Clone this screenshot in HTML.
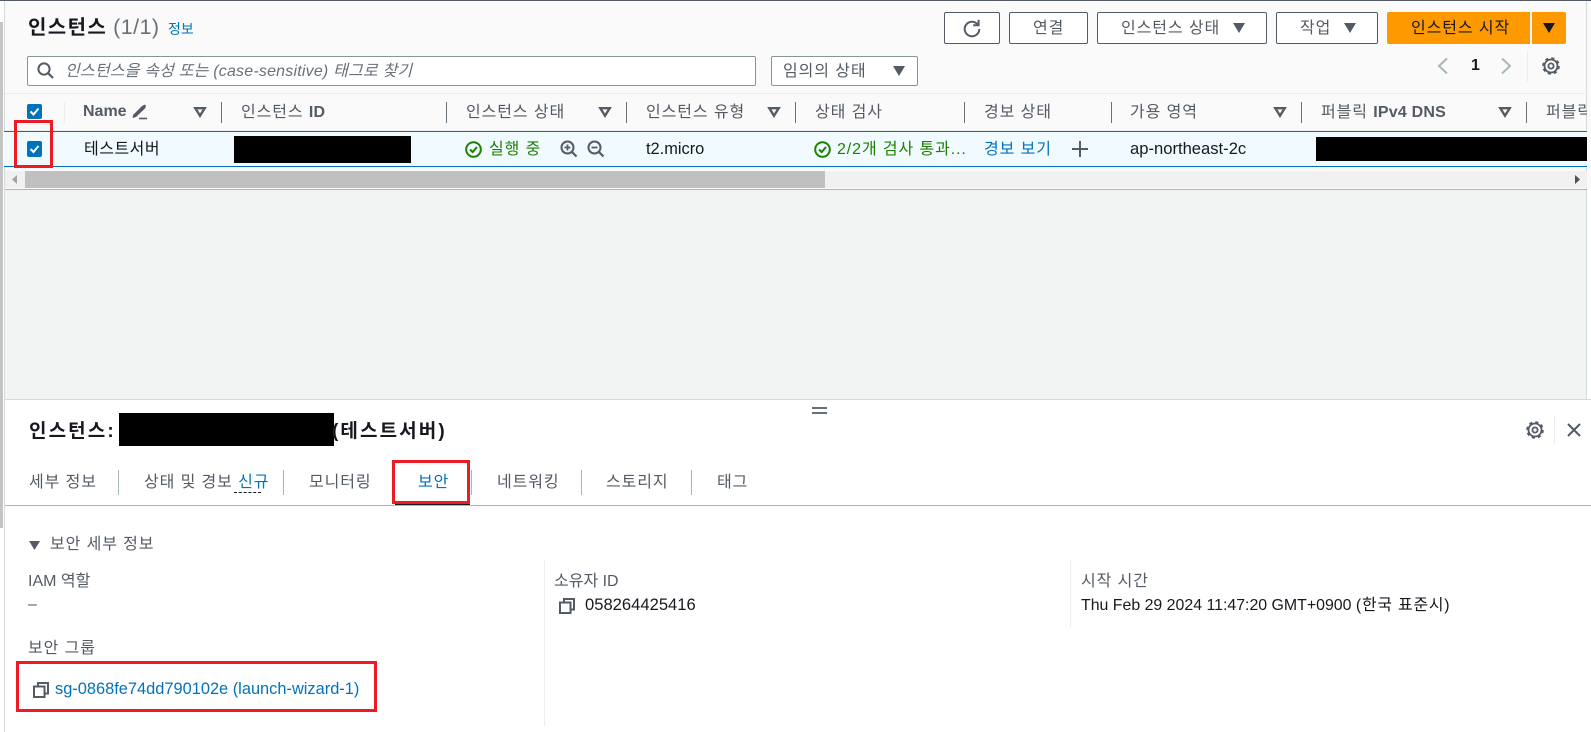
<!DOCTYPE html>
<html lang="ko"><head><meta charset="utf-8"><title>인스턴스</title>
<style>
html,body{margin:0;padding:0;width:1591px;height:732px;overflow:hidden;background:#fff}
body{position:relative;font-family:"Liberation Sans","Noto Sans CJK KR",sans-serif;font-size:16px;color:#16191f}
.a{position:absolute;box-sizing:border-box}
.t{position:absolute;white-space:nowrap;line-height:20px;height:20px}
.k{letter-spacing:.9px;font-size:16px}
.h{color:#545b64}
.b{color:#0073bb}
.g{color:#1d8102}
.btn{position:absolute;box-sizing:border-box;background:#fff;border:1px solid #545b64;border-radius:2px;height:32px;top:12px}
.v{position:absolute;width:1px;background:#687078;top:102px;height:21px}
.tv{position:absolute;width:1px;background:#aab7b8;top:470px;height:25px}
.red{position:absolute;box-sizing:border-box;border:3px solid #ed1c24}
.blk{position:absolute;background:#000}
svg{position:absolute;overflow:visible}
</style></head><body>

<!-- backgrounds -->
<div class="a" style="left:5px;top:0;width:1586px;height:189px;background:#fafafa"></div>
<div class="a" style="left:5px;top:189px;width:1582px;height:210px;background:#f2f3f3"></div>
<div class="a" style="left:0;top:0;width:1591px;height:1px;background:#545b64"></div>
<div class="a" style="left:0;top:22px;width:3px;height:506px;background:#c4c4c4"></div>
<div class="a" style="left:4px;top:1px;width:1px;height:731px;background:#d5dbdb"></div>
<div class="a" style="left:1586px;top:1px;width:1px;height:398px;background:#d5dbdb"></div>

<!-- title -->
<div class="t" style="left:28px;top:15px;font-size:20px;line-height:24px;height:24px;font-weight:700;letter-spacing:1.400px;word-spacing:-1px">인스턴스 <span style="font-weight:400;color:#687078;letter-spacing:.4px;font-size:21.500px">(1/1)</span></div>
<div class="t b" style="left:168px;top:19px;font-size:14px">정보</div>

<!-- action buttons -->
<div class="btn" style="left:944px;width:56px"></div>
<svg style="left:962px;top:18px" width="20" height="20" viewBox="0 0 20 20"><path d="M15.500 6.200A7.300 7.300 0 1 0 17.300 11" fill="none" stroke="#545b64" stroke-width="2"/><path d="M16.600 1.800V7.200H11.200" fill="none" stroke="#545b64" stroke-width="2"/></svg>
<div class="btn" style="left:1009px;width:79px"></div>
<div class="t k h" style="left:1033px;top:19px">연결</div>
<div class="btn" style="left:1097px;width:170px"></div>
<div class="t k h" style="left:1121px;top:19px">인스턴스 상태</div>
<svg style="left:1233px;top:23px" width="12" height="10"><path d="M0 0H12L6 10Z" fill="#545b64"/></svg>
<div class="btn" style="left:1276px;width:102px"></div>
<div class="t k h" style="left:1300px;top:19px">작업</div>
<svg style="left:1344px;top:23px" width="12" height="10"><path d="M0 0H12L6 10Z" fill="#545b64"/></svg>
<div class="a" style="left:1387px;top:12px;width:143px;height:32px;background:#ff9900;border-radius:2px 0 0 2px"></div>
<div class="t k" style="left:1411px;top:19px">인스턴스 시작</div>
<div class="a" style="left:1532px;top:12px;width:34px;height:32px;background:#ff9900;border-radius:0 2px 2px 0"></div>
<svg style="left:1543px;top:23px" width="12" height="10"><path d="M0 0H12L6 10Z" fill="#16191f"/></svg>

<!-- search -->
<div class="a" style="left:27px;top:56px;width:729px;height:30px;background:#fff;border:1px solid #879596;border-radius:2px"></div>
<svg style="left:37px;top:62px" width="17" height="17" viewBox="0 0 17 17"><circle cx="7" cy="7" r="5.600" fill="none" stroke="#545b64" stroke-width="2"/><path d="M11 11L16 16" stroke="#545b64" stroke-width="2.200"/></svg>
<div class="t" style="left:65px;top:62px;color:#687078;font-style:italic;font-size:16px;letter-spacing:.2px">인스턴스을 속성 또는 (case-sensitive) 태그로 찾기</div>
<div class="a" style="left:771px;top:56px;width:147px;height:30px;background:#fff;border:1px solid #879596;border-radius:2px"></div>
<div class="t k h" style="left:783px;top:62px">임의의 상태</div>
<svg style="left:893px;top:66px" width="12" height="10"><path d="M0 0H12L6 10Z" fill="#545b64"/></svg>

<!-- pagination -->
<svg style="left:1437px;top:57px" width="12" height="18" viewBox="0 0 12 18"><path d="M10 1.500L2 9L10 16.500" fill="none" stroke="#aab7b8" stroke-width="2"/></svg>
<div class="t" style="left:1471px;top:56px;font-weight:700;font-size:16px">1</div>
<svg style="left:1500px;top:57px" width="12" height="18" viewBox="0 0 12 18"><path d="M2 1.500L10 9L2 16.500" fill="none" stroke="#aab7b8" stroke-width="2"/></svg>
<div class="a" style="left:1527px;top:52px;width:1px;height:30px;background:#eaeded"></div>
<svg style="left:1542px;top:57px" width="18" height="18" viewBox="0 0 18 18"><circle cx="9" cy="9" r="6.500" fill="none" stroke="#545b64" stroke-width="1.800"/><circle cx="9" cy="9" r="2.600" fill="none" stroke="#545b64" stroke-width="1.800"/><circle cx="9" cy="9" r="7.900" fill="none" stroke="#545b64" stroke-width="1.800" stroke-dasharray="3.200 3"/></svg>

<!-- table header -->
<div class="a" style="left:5px;top:93px;width:1582px;height:1px;background:#eaeded"></div>
<div class="a" style="left:5px;top:130px;width:1582px;height:1px;background:#eaeded"></div>
<div class="a" style="left:27px;top:104px;width:15px;height:15px;background:#0073bb;border-radius:2px"></div>
<svg style="left:27px;top:104px" width="15" height="15"><path d="M3.500 7.500L6.500 10.500L11.500 4.500" fill="none" stroke="#fff" stroke-width="2"/></svg>
<div class="a" style="left:64px;top:102px;width:1px;height:21px;background:#eaeded"></div>
<div class="t h" style="left:83px;top:102px;font-weight:700;font-size:16px">Name</div>
<svg style="left:131px;top:103px" width="17" height="17" viewBox="0 0 17 17"><path d="M2 12L11 3L14 1.500L15 3L14 5.500L5 14L1.500 15Z" fill="#545b64"/><path d="M8 15.500H16" stroke="#545b64" stroke-width="1.600"/></svg>
<svg style="left:194px;top:107px" width="12" height="10" viewBox="0 0 12 10"><path d="M1.300 1.200H10.700L6 8.700Z" fill="none" stroke="#545b64" stroke-width="2.400"/></svg>
<div class="v" style="left:221px"></div>
<div class="t k h" style="left:241px;top:103px">인스턴스 <b style="letter-spacing:.2px">ID</b></div>
<div class="v" style="left:446px"></div>
<div class="t k h" style="left:466px;top:103px">인스턴스 상태</div>
<svg style="left:599px;top:107px" width="12" height="10" viewBox="0 0 12 10"><path d="M1.300 1.200H10.700L6 8.700Z" fill="none" stroke="#545b64" stroke-width="2.400"/></svg>
<div class="v" style="left:626px"></div>
<div class="t k h" style="left:646px;top:103px">인스턴스 유형</div>
<svg style="left:768px;top:107px" width="12" height="10" viewBox="0 0 12 10"><path d="M1.300 1.200H10.700L6 8.700Z" fill="none" stroke="#545b64" stroke-width="2.400"/></svg>
<div class="v" style="left:795px"></div>
<div class="t k h" style="left:815px;top:103px">상태 검사</div>
<div class="v" style="left:964px"></div>
<div class="t k h" style="left:984px;top:103px">경보 상태</div>
<div class="v" style="left:1111px"></div>
<div class="t k h" style="left:1130px;top:103px">가용 영역</div>
<svg style="left:1274px;top:107px" width="12" height="10" viewBox="0 0 12 10"><path d="M1.300 1.200H10.700L6 8.700Z" fill="none" stroke="#545b64" stroke-width="2.400"/></svg>
<div class="v" style="left:1301px"></div>
<div class="t k h" style="left:1321px;top:103px">퍼블릭 <b style="letter-spacing:.2px">IPv4 DNS</b></div>
<svg style="left:1499px;top:107px" width="12" height="10" viewBox="0 0 12 10"><path d="M1.300 1.200H10.700L6 8.700Z" fill="none" stroke="#545b64" stroke-width="2.400"/></svg>
<div class="v" style="left:1526px"></div>
<div class="a" style="left:1546px;top:103px;width:41px;height:20px;overflow:hidden"><div class="t k h" style="left:0;top:0">퍼블릭</div></div>

<!-- selected row -->
<div class="a" style="left:4px;top:131px;width:1583px;height:36px;background:#f1faff;border-top:1px solid #0073bb;border-bottom:1px solid #0073bb"></div>
<div class="a" style="left:27px;top:141px;width:15px;height:16px;background:#0073bb;border-radius:2px"></div>
<svg style="left:27px;top:141px" width="15" height="16"><path d="M3.500 8L6.500 11L11.500 5" fill="none" stroke="#fff" stroke-width="2"/></svg>
<div class="t k" style="left:84px;top:140px;letter-spacing:.5px">테스트서버</div>
<div class="blk" style="left:234px;top:136px;width:177px;height:27px"></div>
<svg style="left:465px;top:141px" width="17" height="17" viewBox="0 0 17 17"><circle cx="8.500" cy="8.500" r="7.300" fill="none" stroke="#1d8102" stroke-width="2"/><path d="M5 8.500L7.700 11L12 6" fill="none" stroke="#1d8102" stroke-width="2"/></svg>
<div class="t k g" style="left:489px;top:140px">실행 중</div>
<svg style="left:560px;top:140px" width="18" height="18" viewBox="0 0 18 18"><circle cx="7.500" cy="7.500" r="6" fill="none" stroke="#545b64" stroke-width="2"/><path d="M12 12L16.500 16.500" stroke="#545b64" stroke-width="2.200"/><path d="M4.500 7.500H10.500M7.500 4.500V10.500" stroke="#545b64" stroke-width="1.800"/></svg>
<svg style="left:587px;top:140px" width="18" height="18" viewBox="0 0 18 18"><circle cx="7.500" cy="7.500" r="6" fill="none" stroke="#545b64" stroke-width="2"/><path d="M12 12L16.500 16.500" stroke="#545b64" stroke-width="2.200"/><path d="M4.500 7.500H10.500" stroke="#545b64" stroke-width="1.800"/></svg>
<div class="t" style="left:646px;top:139px;font-size:16.400px">t2.micro</div>
<svg style="left:814px;top:141px" width="17" height="17" viewBox="0 0 17 17"><circle cx="8.500" cy="8.500" r="7.300" fill="none" stroke="#1d8102" stroke-width="2"/><path d="M5 8.500L7.700 11L12 6" fill="none" stroke="#1d8102" stroke-width="2"/></svg>
<div class="t k g" style="left:837px;top:140px">2/2개 검사 통과...</div>
<div class="t k b" style="left:984px;top:140px">경보 보기</div>
<svg style="left:1072px;top:141px" width="16" height="16"><path d="M0 8H16M8 0V16" stroke="#545b64" stroke-width="2"/></svg>
<div class="t" style="left:1130px;top:139px;font-size:16.600px">ap-northeast-2c</div>
<div class="blk" style="left:1316px;top:137px;width:271px;height:24px"></div>

<!-- horizontal scrollbar -->
<div class="a" style="left:5px;top:171px;width:1582px;height:17px;background:#f1f1f1"></div>
<div class="a" style="left:25px;top:171px;width:800px;height:17px;background:#c0c0c0"></div>
<svg style="left:12px;top:175px" width="6" height="9"><path d="M5 0V9L0 4.500Z" fill="#a3a3a3"/></svg>
<svg style="left:1575px;top:175px" width="6" height="9"><path d="M0 0V9L5 4.500Z" fill="#505050"/></svg>
<div class="a" style="left:5px;top:189px;width:1582px;height:1px;background:#aab7b8"></div>

<!-- bottom pane -->
<div class="a" style="left:5px;top:399px;width:1586px;height:1px;background:#d5dbdb"></div>
<div class="a" style="left:5px;top:400px;width:1586px;height:332px;background:#fff"></div>
<div class="a" style="left:812px;top:407px;width:15px;height:2px;background:#687078"></div>
<div class="a" style="left:812px;top:412px;width:15px;height:2px;background:#687078"></div>

<div class="t" style="left:29px;top:420px;font-size:19px;line-height:24px;height:24px;font-weight:700;letter-spacing:2.100px">인스턴스:</div>
<div class="blk" style="left:119px;top:413px;width:215px;height:33px"></div>
<div class="t" style="left:332px;top:420px;font-size:19px;line-height:24px;height:24px;font-weight:700;letter-spacing:2.100px">(테스트서버)</div>
<svg style="left:1526px;top:421px" width="18" height="18" viewBox="0 0 18 18"><circle cx="9" cy="9" r="6.500" fill="none" stroke="#545b64" stroke-width="1.800"/><circle cx="9" cy="9" r="2.600" fill="none" stroke="#545b64" stroke-width="1.800"/><circle cx="9" cy="9" r="7.900" fill="none" stroke="#545b64" stroke-width="1.800" stroke-dasharray="3.200 3"/></svg>
<div class="a" style="left:1554px;top:417px;width:1px;height:26px;background:#eaeded"></div>
<svg style="left:1567px;top:423px" width="14" height="14"><path d="M1 1L13 13M13 1L1 13" stroke="#545b64" stroke-width="2"/></svg>

<!-- tabs -->
<div class="t k h" style="left:29px;top:473px">세부 정보</div>
<div class="tv" style="left:118px"></div>
<div class="t k h" style="left:144px;top:473px">상태 및 경보 <span class="b">신규</span></div>
<div class="a" style="left:234px;top:492px;width:27px;height:0;border-top:1px dashed #16191f"></div>
<div class="tv" style="left:283px"></div>
<div class="t k h" style="left:309px;top:473px">모니터링</div>
<div class="t k b" style="left:418px;top:473px">보안</div>
<div class="tv" style="left:471px"></div>
<div class="t k h" style="left:497px;top:473px">네트워킹</div>
<div class="tv" style="left:581px"></div>
<div class="t k h" style="left:606px;top:473px">스토리지</div>
<div class="tv" style="left:691px"></div>
<div class="t k h" style="left:717px;top:473px">태그</div>
<div class="a" style="left:5px;top:505px;width:1586px;height:1px;background:#aab7b8"></div>
<div class="a" style="left:395px;top:503px;width:75px;height:2px;background:#16191f"></div>

<!-- details -->
<svg style="left:29px;top:541px" width="11" height="9"><path d="M0 0H11L5.500 9Z" fill="#545b64"/></svg>
<div class="t k h" style="left:50px;top:535px">보안 세부 정보</div>
<div class="t h" style="left:28px;top:572px;font-size:16px">IAM 역할</div>
<div class="t h" style="left:28px;top:595px">–</div>
<div class="t k h" style="left:28px;top:639px">보안 그룹</div>
<svg style="left:33px;top:682px" width="16" height="16" viewBox="0 0 16 16"><rect x="1" y="4.500" width="10.500" height="10.500" fill="none" stroke="#545b64" stroke-width="2"/><path d="M5 4V1H15V11.500H12" fill="none" stroke="#545b64" stroke-width="2"/></svg>
<div class="t b" style="left:55px;top:679px;font-size:16.400px">sg-0868fe74dd790102e (launch-wizard-1)</div>

<div class="a" style="left:544px;top:560px;width:1px;height:166px;background:#eaeded"></div>
<div class="t h" style="left:554px;top:572px;font-size:16px">소유자 ID</div>
<svg style="left:559px;top:598px" width="16" height="16" viewBox="0 0 16 16"><rect x="1" y="4.500" width="10.500" height="10.500" fill="none" stroke="#545b64" stroke-width="2"/><path d="M5 4V1H15V11.500H12" fill="none" stroke="#545b64" stroke-width="2"/></svg>
<div class="t" style="left:585px;top:595px;font-size:16.600px">058264425416</div>

<div class="a" style="left:1070px;top:560px;width:1px;height:67px;background:#eaeded"></div>
<div class="t k h" style="left:1081px;top:572px">시작 시간</div>
<div class="t" style="left:1081px;top:596px;font-size:15.900px">Thu Feb 29 2024 11:47:20 GMT+0900 <span style="letter-spacing:.8px">(한국 표준시)</span></div>

<!-- red annotations -->
<div class="red" style="left:14px;top:120px;width:39px;height:48px"></div>
<div class="red" style="left:392px;top:460px;width:78px;height:44px"></div>
<div class="red" style="left:16px;top:661px;width:361px;height:51px"></div>
</body></html>
